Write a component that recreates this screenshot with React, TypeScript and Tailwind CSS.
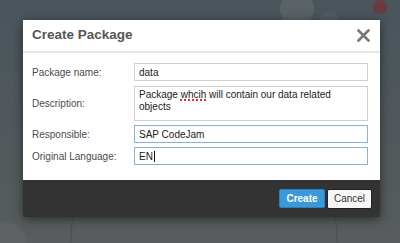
// Create Package dialog over a dimmed workspace
const font = { fontFamily: '"Liberation Sans", Arial, sans-serif' };

function Field({ label, value, active, caret }: { label: string; value: string; active?: boolean; caret?: boolean }) {
  return (
    <div className="flex items-center">
      <label className="w-[102px] text-[10px] text-[#4a4a4a]">{label}</label>
      <div
        className={`flex h-[18px] w-[234px] items-center border bg-white px-[4px] text-[10px] text-[#222] ${
          active ? "border-[#8eaed6]" : "border-[#cfcfcf]"
        }`}
      >
        <span>{value}</span>
        {caret && <span className="ml-px h-[11px] w-px bg-[#111]" />}
      </div>
    </div>
  );
}

export default function App() {
  return (
    <div
      style={font}
      className="relative h-[243px] w-[400px] overflow-hidden bg-gradient-to-b from-[#4a555c] to-[#585c5c]"
    >
      {/* faint background shapes */}
      <div className="absolute left-[280px] top-[-8px] h-[34px] w-[34px] rounded-full bg-[#5a6266]" />
      <div className="absolute left-[318px] top-[12px] h-[22px] w-[22px] rounded-full bg-[#535c62]" />
      <div className="absolute left-[373px] top-[0px] h-[14px] w-[14px] rounded-full bg-[#6b3a3f]" />
      <div className="absolute left-[-14px] top-[222px] h-[40px] w-[40px] rounded-full bg-[#5d6161]" />
      <div className="absolute left-[71px] top-[219px] h-[24px] w-px rotate-[4deg] bg-[#4b4f4f]" />
      <div className="absolute left-[336px] top-[219px] h-[24px] w-px -rotate-[4deg] bg-[#4b4f4f]" />

      <div className="absolute left-[23px] top-[20px] w-[357px] shadow-[0_2px_10px_rgba(0,0,0,0.5)]">
        <div className="bg-white">
          <div className="flex h-[33px] items-center justify-between border-b-2 border-[#e6e6e6] pl-[9px] pr-[10px]">
            <span className="text-[13.5px] font-bold text-[#555]">Create Package</span>
            <svg width="13" height="13" viewBox="0 0 12 12">
              <path d="M1.5 1.5l9 9M10.5 1.5l-9 9" stroke="#7a7a7a" strokeWidth="2.6" strokeLinecap="square" />
            </svg>
          </div>
          <div className="flex flex-col gap-[4px] pb-[15px] pl-[9px] pt-[10px]">
            <Field label="Package name:" value="data" />
            <div className="mt-px flex items-center">
              <label className="w-[102px] text-[10px] text-[#4a4a4a]">Description:</label>
              <div className="h-[35px] w-[234px] border border-[#cfcfcf] px-[4px] pt-[2px] text-[10px] leading-[12px] text-[#222]">
                Package{" "}
                <span className="underline decoration-[#e03030] decoration-dotted decoration-2 underline-offset-[1px]">whcih</span>{" "}
                will contain our data related
                <br />
                objects
              </div>
            </div>
            <Field label="Responsible:" value="SAP CodeJam" active />
            <Field label="Original Language:" value="EN" active caret />
          </div>
        </div>
        <div className="flex h-[37px] items-center justify-end gap-[2px] bg-[#333333] pr-[8px]">
          <button className="h-[19px] w-[46px] rounded-[2px] border border-[#2a80c0] bg-[#3a9ad9] text-[10px] font-bold text-white">
            Create
          </button>
          <button className="h-[20px] w-[45px] rounded-[2px] border border-[#222] bg-[#f6f6f6] text-[10px] text-[#333]">
            Cancel
          </button>
        </div>
      </div>
    </div>
  );
}
